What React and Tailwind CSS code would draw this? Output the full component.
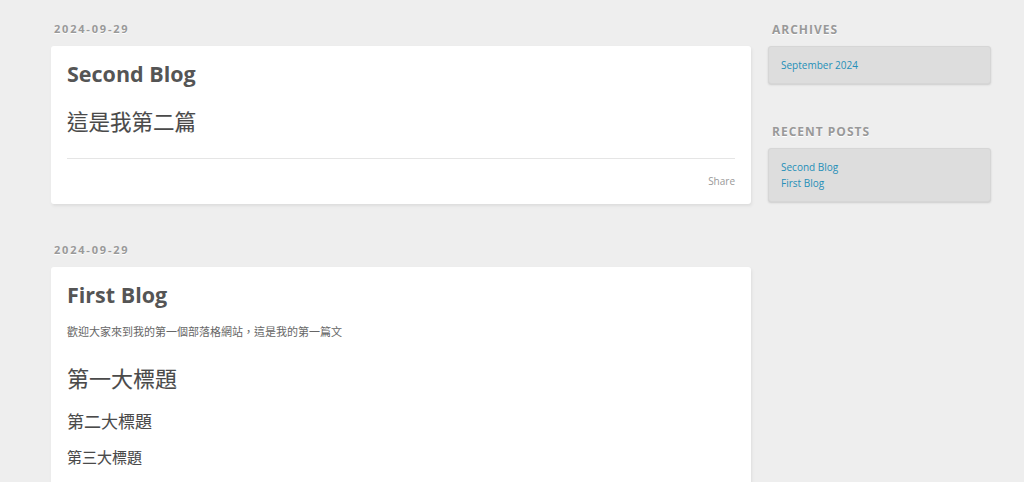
import React from "react";

const font = { fontFamily: '"Open Sans", "Noto Sans CJK TC", sans-serif' };

function DateLabel({ children }) {
  return (
    <div className="text-[11px] leading-[14px] font-bold tracking-[1.8px] text-[#999] pl-[3px] [text-shadow:0_1px_#fff]">
      {children}
    </div>
  );
}

function WidgetTitle({ children }) {
  return (
    <div className="text-[12px] leading-[14px] font-bold tracking-[1px] text-[#999] pl-[4px] pt-[1px] uppercase [text-shadow:0_1px_#fff]">
      {children}
    </div>
  );
}

export default function App() {
  return (
    <div className="min-h-[482px] bg-[#eee] text-[#555]" style={font}>
      <div className="flex gap-[17px] pl-[51px] pt-[22px]">
        <main className="w-[700px] flex flex-col">
          <DateLabel>2024-09-29</DateLabel>
          <article className="mt-[10px] bg-white rounded-[3px] shadow-[1px_2px_3px_#ddd] px-[16px] pt-[15px] pb-[16px]">
            <h1 className="text-[21.5px] leading-[26px] font-bold text-[#555]">Second Blog</h1>
            <h2 className="mt-[20px] text-[21.5px] leading-[30px] font-normal text-[#4a4a4a] [-webkit-text-stroke:0.12px_#4a4a4a]">這是我第二篇</h2>
            <div className="mt-[21px] border-t border-[#e5e5e5]" />
            <div className="pt-[15px] flex justify-end">
              <span className="text-[10px] leading-[14px] text-[#999]">Share</span>
            </div>
          </article>

          <div className="mt-[39px]">
            <DateLabel>2024-09-29</DateLabel>
          </div>
          <article className="mt-[10px] bg-white rounded-t-[3px] shadow-[1px_2px_3px_#ddd] px-[16px] pt-[15px] pb-[20px]">
            <h1 className="text-[21.5px] leading-[26px] font-bold text-[#555]">First Blog</h1>
            <p className="mt-[15px] text-[11px] leading-[18px] text-[#666]">
              歡迎大家來到我的第一個部落格網站，這是我的第一篇文
            </p>
            <h2 className="mt-[22px] text-[22px] leading-[30px] font-normal text-[#4a4a4a] [-webkit-text-stroke:0.12px_#4a4a4a]">第一大標題</h2>
            <h3 className="mt-[17px] text-[17px] leading-[24px] font-normal text-[#4a4a4a] [-webkit-text-stroke:0.1px_#4a4a4a]">第二大標題</h3>
            <h4 className="mt-[13px] text-[15px] leading-[20px] font-normal text-[#4a4a4a] [-webkit-text-stroke:0.1px_#4a4a4a]">第三大標題</h4>
          </article>
        </main>

        <aside className="w-[223px] flex flex-col">
          <WidgetTitle>Archives</WidgetTitle>
          <div className="mt-[9px] bg-[#ddd] border border-[#d6d6d6] rounded-[3px] shadow-[0_1px_2px_#ccc] px-[12px] py-[10px]">
            <a className="block text-[10px] leading-[16px] text-[#258fb8]">September 2024</a>
          </div>

          <div className="mt-[40px]">
            <WidgetTitle>Recent Posts</WidgetTitle>
          </div>
          <div className="mt-[9px] bg-[#ddd] border border-[#d6d6d6] rounded-[3px] shadow-[0_1px_2px_#ccc] px-[12px] py-[10px]">
            <a className="block text-[10px] leading-[16px] text-[#258fb8]">Second Blog</a>
            <a className="block text-[10px] leading-[16px] text-[#258fb8]">First Blog</a>
          </div>
        </aside>
      </div>
    </div>
  );
}
